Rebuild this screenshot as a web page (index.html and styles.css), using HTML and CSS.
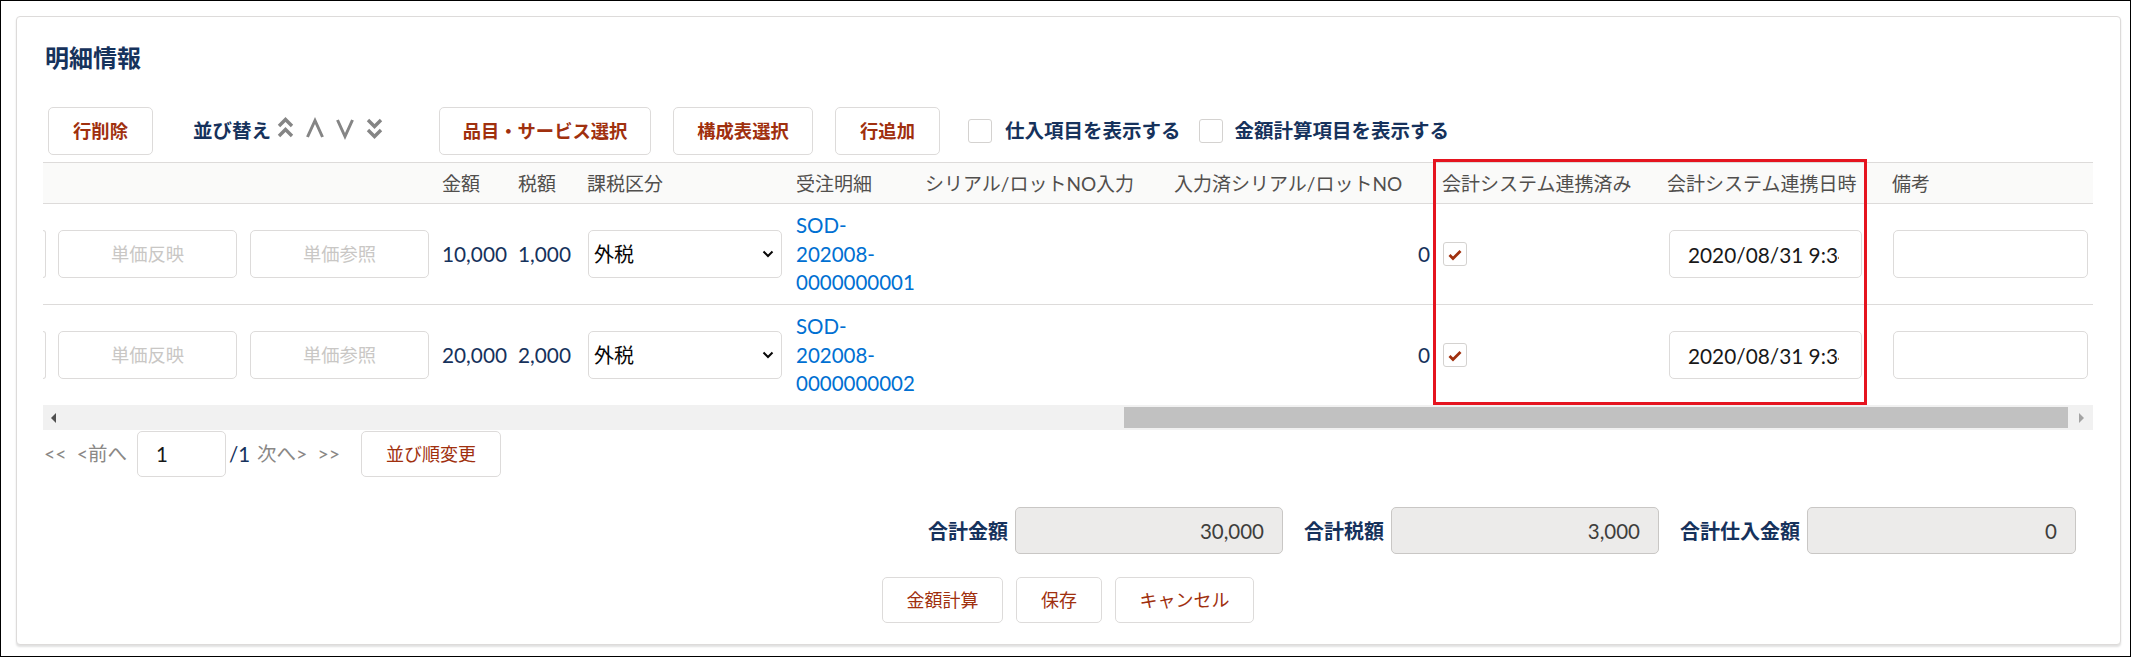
FILE: index.html
```html
<!DOCTYPE html>
<html lang="ja">
<head>
<meta charset="utf-8">
<title>明細情報</title>
<link rel="stylesheet" href="styles.css">
</head>
<body>
<div class="frame">
  <section class="card">
    <h2 class="title">明細情報</h2>

    <div class="toolbar">
      <button class="btn btn-strong btn-del">行削除</button>
      <span class="sort-label">並び替え</span>
      <span class="sort-icons">
        <svg class="sort-ico" width="17" height="26" viewBox="0 0 17 26"><path d="M2 10 L8.5 3.5 L15 10 M2 20 L8.5 13.5 L15 20" fill="none" stroke="#858585" stroke-width="3.4"/></svg>
        <svg class="sort-ico" width="18" height="26" viewBox="0 0 18 26"><path d="M1.5 21 L9 4.5 L16.5 21" fill="none" stroke="#858585" stroke-width="3"/></svg>
        <svg class="sort-ico" width="18" height="26" viewBox="0 0 18 26"><path d="M1.5 4 L9 20.5 L16.5 4" fill="none" stroke="#858585" stroke-width="3"/></svg>
        <svg class="sort-ico" width="17" height="26" viewBox="0 0 17 26"><path d="M2 4 L8.5 10.5 L15 4 M2 14 L8.5 20.5 L15 14" fill="none" stroke="#858585" stroke-width="3.4"/></svg>
      </span>
      <button class="btn btn-strong btn-item">品目・サービス選択</button>
      <button class="btn btn-strong btn-bom">構成表選択</button>
      <button class="btn btn-strong btn-add">行追加</button>
      <label class="opt opt-purchase"><span class="cb"></span><span class="opt-text">仕入項目を表示する</span></label>
      <label class="opt opt-calc"><span class="cb"></span><span class="opt-text">金額計算項目を表示する</span></label>
    </div>

    <div class="grid-wrap">
      <div class="grid-row grid-head">
        <div class="cell c-lead"></div>
        <div class="cell c-reflect"></div>
        <div class="cell c-refer"></div>
        <div class="cell c-amount">金額</div>
        <div class="cell c-tax">税額</div>
        <div class="cell c-taxcls">課税区分</div>
        <div class="cell c-order">受注明細</div>
        <div class="cell c-serial">シリアル/ロットNO入力</div>
        <div class="cell c-entered">入力済シリアル/ロットNO</div>
        <div class="cell c-synced">会計システム連携済み</div>
        <div class="cell c-synced-at">会計システム連携日時</div>
        <div class="cell c-note">備考</div>
      </div>

      <div class="grid-row grid-body">
        <div class="cell c-lead"><span class="stub"></span></div>
        <div class="cell c-reflect"><button class="btn btn-off">単価反映</button></div>
        <div class="cell c-refer"><button class="btn btn-off">単価参照</button></div>
        <div class="cell c-amount num">10,000</div>
        <div class="cell c-tax num">1,000</div>
        <div class="cell c-taxcls">
          <div class="select-box">
            <select class="select"><option>外税</option></select>
            <svg class="select-chev" width="12" height="8" viewBox="0 0 12 8"><path d="M1.5 1.5 L6 6 L10.5 1.5" fill="none" stroke="#080707" stroke-width="2"/></svg>
          </div>
        </div>
        <div class="cell c-order"><a class="link" href="#">SOD-<br>202008-<br>0000000001</a></div>
        <div class="cell c-serial"></div>
        <div class="cell c-entered num">0</div>
        <div class="cell c-synced">
          <span class="cb cb-on"><svg width="24" height="24" viewBox="0 0 24 24"><path d="M6.5 13 L10 16.5 L17.5 9" fill="none" stroke="#a0300e" stroke-width="2.8"/></svg></span>
        </div>
        <div class="cell c-synced-at"><input class="field field-date" type="text" value="2020/08/31 9:34"></div>
        <div class="cell c-note"><input class="field field-note" type="text" value=""></div>
      </div>

      <div class="grid-row grid-body grid-last">
        <div class="cell c-lead"><span class="stub"></span></div>
        <div class="cell c-reflect"><button class="btn btn-off">単価反映</button></div>
        <div class="cell c-refer"><button class="btn btn-off">単価参照</button></div>
        <div class="cell c-amount num">20,000</div>
        <div class="cell c-tax num">2,000</div>
        <div class="cell c-taxcls">
          <div class="select-box">
            <select class="select"><option>外税</option></select>
            <svg class="select-chev" width="12" height="8" viewBox="0 0 12 8"><path d="M1.5 1.5 L6 6 L10.5 1.5" fill="none" stroke="#080707" stroke-width="2"/></svg>
          </div>
        </div>
        <div class="cell c-order"><a class="link" href="#">SOD-<br>202008-<br>0000000002</a></div>
        <div class="cell c-serial"></div>
        <div class="cell c-entered num">0</div>
        <div class="cell c-synced">
          <span class="cb cb-on"><svg width="24" height="24" viewBox="0 0 24 24"><path d="M6.5 13 L10 16.5 L17.5 9" fill="none" stroke="#a0300e" stroke-width="2.8"/></svg></span>
        </div>
        <div class="cell c-synced-at"><input class="field field-date" type="text" value="2020/08/31 9:34"></div>
        <div class="cell c-note"><input class="field field-note" type="text" value=""></div>
      </div>

      <div class="highlight"></div>
    </div>

    <div class="hscroll">
      <span class="scroll-btn"><span class="tri tri-left"></span></span>
      <span class="scroll-track"><span class="scroll-thumb"></span></span>
      <span class="scroll-btn"><span class="tri tri-right"></span></span>
    </div>

    <div class="pager">
      <span class="pg-text pg-first">&lt;&lt;</span>
      <span class="pg-text pg-prev">&lt;前へ</span>
      <input class="pg-input" type="text" value="1">
      <span class="pg-text pg-total">/1</span>
      <span class="pg-text pg-next">次へ&gt;</span>
      <span class="pg-text pg-last">&gt;&gt;</span>
      <button class="btn btn-plain btn-reorder">並び順変更</button>
    </div>

    <div class="totals">
      <div class="total-item">
        <span class="total-label">合計金額</span>
        <input class="total-field" type="text" value="30,000" readonly>
      </div>
      <div class="total-item">
        <span class="total-label">合計税額</span>
        <input class="total-field" type="text" value="3,000" readonly>
      </div>
      <div class="total-item">
        <span class="total-label">合計仕入金額</span>
        <input class="total-field total-field-wide" type="text" value="0" readonly>
      </div>
    </div>

    <div class="actions">
      <button class="btn btn-plain btn-calc">金額計算</button>
      <button class="btn btn-plain btn-save">保存</button>
      <button class="btn btn-plain btn-cancel">キャンセル</button>
    </div>
  </section>
</div>
</body>
</html>
```

FILE: styles.css
```css
* {
  box-sizing: border-box;
}

html,
body {
  margin: 0;
  padding: 0;
  background: #ffffff;
}

body {
  font-family: Lato, "Noto Sans CJK JP", sans-serif;
  color: #16325c;
}

.frame {
  width: 2131px;
  height: 657px;
  border: 1px solid #000000;
  padding: 15px 0 0 15px;
  overflow: hidden;
}

.card {
  width: 2105px;
  height: 629px;
  border: 1px solid #dddbda;
  border-radius: 4px;
  box-shadow: 0 2px 2px rgba(0, 0, 0, 0.12);
  padding: 25px 27px 0 26px;
  background: #ffffff;
}

.title {
  margin: 0 0 0 2px;
  font-size: 24px;
  line-height: 32px;
  font-weight: 700;
  color: #16325c;
}

/* ---------- toolbar ---------- */
.toolbar {
  display: flex;
  align-items: center;
  height: 48px;
  margin-top: 33px;
}

.btn {
  font-family: Lato, "Noto Sans CJK JP", sans-serif;
  height: 48px;
  border: 1px solid #dddbda;
  border-radius: 5px;
  background: #ffffff;
  color: #a0300e;
  font-size: 18px;
  line-height: 1;
  padding: 0;
  text-align: center;
  white-space: nowrap;
}

.btn-strong {
  font-weight: 700;
  font-size: 18.3px;
}

.btn-del {
  width: 105px;
  margin-left: 5px;
}

.sort-label {
  margin-left: 40px;
  font-size: 19.5px;
  font-weight: 700;
  color: #16325c;
  line-height: 1;
}

.sort-icons {
  display: flex;
  align-items: center;
  margin-left: 6px;
  margin-top: -4px;
}

.sort-ico {
  display: block;
  margin-right: 12px;
}

.sort-ico:last-child {
  margin-right: 0;
}

.btn-item {
  width: 212px;
  margin-left: 56px;
}

.btn-bom {
  width: 140px;
  margin-left: 22px;
}

.btn-add {
  width: 105px;
  margin-left: 22px;
}

.opt {
  display: flex;
  align-items: center;
  font-size: 19.5px;
  font-weight: 700;
  color: #16325c;
  line-height: 1;
}

.opt-purchase {
  margin-left: 28px;
}

.opt-calc {
  margin-left: 18px;
}

.opt-purchase .opt-text {
  margin-left: 13px;
}

.opt-calc .opt-text {
  margin-left: 12px;
}

.cb {
  display: inline-block;
  width: 24px;
  height: 24px;
  border: 1px solid #d4d2d0;
  border-radius: 3px;
  background: #ffffff;
  flex: none;
}

.cb svg {
  display: block;
  margin: -1px;
}

/* ---------- grid ---------- */
.grid-wrap {
  position: relative;
  margin-top: 7px;
}

.grid-row {
  display: grid;
  grid-template-columns: 11px 190px 192px 78px 68px 208px 128px 249px 269px 224px 226px 207px;
  align-items: center;
}

.grid-head {
  height: 42px;
  border-top: 1px solid #dddbda;
  border-bottom: 1px solid #dddbda;
  background: #fafaf9;
  font-size: 19px;
  color: #514f4d;
  white-space: nowrap;
  line-height: 1;
}

.grid-body {
  height: 101px;
  border-bottom: 1px solid #dddbda;
}

.grid-last {
  height: 100px;
  border-bottom: none;
}

.cell {
  min-width: 0;
}

.c-reflect { padding-left: 4px; }
.c-refer { padding-left: 6px; }
.c-amount { padding-left: 6px; }
.c-tax { padding-left: 4px; }
.c-taxcls { padding-left: 5px; }
.c-order { padding-left: 6px; }
.c-serial { padding-left: 7px; }
.c-entered { padding-left: 7px; }
.c-synced { padding-left: 6px; }
.c-synced-at { padding-left: 7px; }
.c-note { padding-left: 6px; }

.grid-body .c-entered {
  text-align: right;
  padding-right: 6px;
}

.grid-body .c-synced {
  padding-left: 7px;
}

.grid-body .c-synced .cb {
  display: block;
  border-color: #d4d2d0;
}

.num {
  font-size: 20.8px;
  color: #16325c;
  line-height: 1;
}

.stub {
  display: block;
  width: 3px;
  height: 48px;
  border: 1px solid #dddbda;
  border-left: none;
  border-radius: 0 5px 5px 0;
}

.btn-off {
  width: 179px;
  color: #c9c7c5;
  font-size: 18.3px;
}

.select-box {
  position: relative;
  width: 194px;
  height: 48px;
  margin-left: 1px;
}

.select {
  width: 100%;
  height: 48px;
  appearance: none;
  -webkit-appearance: none;
  border: 1px solid #dddbda;
  border-radius: 5px;
  background: #ffffff;
  font-family: Lato, "Noto Sans CJK JP", sans-serif;
  font-size: 20px;
  color: #080707;
  padding: 0 30px 0 5px;
}

.select-chev {
  position: absolute;
  right: 8px;
  top: 20px;
}

.link {
  display: block;
  font-size: 20.5px;
  line-height: 28.5px;
  color: #0070d2;
  text-decoration: none;
}

.field {
  height: 48px;
  border: 1px solid #dddbda;
  border-radius: 5px;
  background: #ffffff;
  font-family: Lato, "Noto Sans CJK JP", sans-serif;
  font-size: 20.8px;
  color: #181818;
  padding: 0 22px 0 18px;
  outline: none;
}

.field-date {
  width: 193px;
  margin-left: 2px;
}

.field-note {
  width: 195px;
  margin-left: 1px;
}

.highlight {
  position: absolute;
  left: 1390px;
  top: -3px;
  width: 434px;
  height: 246px;
  border: 3px solid #e5141f;
  pointer-events: none;
}

/* ---------- scrollbar ---------- */
.hscroll {
  display: flex;
  height: 25px;
  background: #f1f1f1;
}

.scroll-btn {
  width: 25px;
  display: flex;
  align-items: center;
  justify-content: center;
  flex: none;
}

.scroll-track {
  flex: 1;
  display: flex;
  justify-content: flex-end;
  align-items: center;
}

.scroll-thumb {
  width: 944px;
  height: 21px;
  background: #c1c1c1;
}

.tri {
  width: 0;
  height: 0;
  border-top: 5px solid transparent;
  border-bottom: 5px solid transparent;
}

.tri-left {
  border-right: 5px solid #505050;
  margin-left: -4px;
}

.tri-right {
  border-left: 5px solid #a3a3a3;
  margin-left: 1px;
}

/* ---------- pager ---------- */
.pager {
  display: flex;
  align-items: center;
  height: 46px;
  margin-top: 1px;
}

.pg-text {
  font-size: 19.5px;
  color: #8a8886;
  white-space: nowrap;
  line-height: 1;
}

.pg-first {
  margin-left: 1px;
}

.pg-prev {
  margin-left: 10px;
}

.pg-input {
  width: 89px;
  height: 46px;
  margin-left: 10px;
  border: 1px solid #dddbda;
  border-radius: 5px;
  padding: 0 10px 0 18px;
  font-family: Lato, "Noto Sans CJK JP", sans-serif;
  font-size: 20.5px;
  color: #181818;
}

.pg-total {
  margin-left: 3px;
  color: #16325c;
  font-size: 20.5px;
}

.pg-next {
  margin-left: 7px;
}

.pg-last {
  margin-left: 10px;
}

.btn-plain {
  height: 46px;
  font-weight: 400;
  font-size: 18px;
}

.btn-reorder {
  width: 140px;
  margin-left: 21px;
}

/* ---------- totals ---------- */
.totals {
  display: flex;
  justify-content: flex-end;
  align-items: center;
  height: 47px;
  margin-top: 30px;
  padding-right: 17px;
  gap: 21px;
}

.total-item {
  display: flex;
  align-items: center;
  gap: 7px;
}

.total-label {
  font-size: 20px;
  font-weight: 700;
  color: #16325c;
  line-height: 1;
}

.total-field {
  width: 268px;
  height: 47px;
  border: 1px solid #c9c7c5;
  border-radius: 5px;
  background: #ecebea;
  text-align: right;
  padding: 0 18px 0 10px;
  font-family: Lato, "Noto Sans CJK JP", sans-serif;
  font-size: 20.5px;
  color: #3e3e3c;
  outline: none;
}

.total-field-wide {
  width: 269px;
}

/* ---------- actions ---------- */
.actions {
  display: flex;
  justify-content: center;
  gap: 13px;
  margin-top: 23px;
}

.btn-calc { width: 121px; }
.btn-save { width: 86px; }
.btn-cancel { width: 139px; }
```
